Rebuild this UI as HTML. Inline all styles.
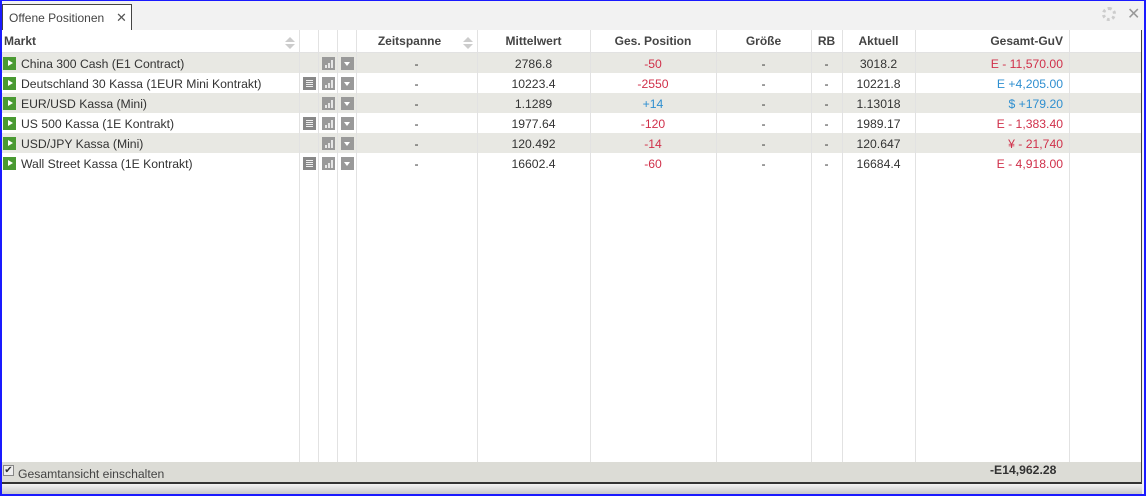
<!DOCTYPE html>
<html><head><meta charset="utf-8"><style>
*{margin:0;padding:0;box-sizing:border-box}
body{width:1146px;height:496px;overflow:hidden;background:#f2f2f2;font-family:"Liberation Sans",Arial,sans-serif;font-size:12px;color:#333;position:relative}
.frame{position:absolute;left:0;top:0;width:1146px;height:496px;border:2px solid #1a1aff;border-top-width:1px;pointer-events:none;z-index:10}
.tab{position:absolute;left:2px;top:4px;width:130px;height:27px;background:#fff;border:1px solid #444;border-bottom:none;font-size:12px;color:#444;padding:6px 0 0 6px}
.tab span{position:absolute;left:113px;top:5px;font-size:13px;color:#555}
.panel{position:absolute;left:2px;top:30px;width:1140px;height:454px;background:#fff;border-right:1px solid #444;border-bottom:2px solid #333}
.vl{position:absolute;top:30px;height:432px;width:1px;background:#e2e2e2}
.hdr{position:absolute;top:30px;height:23px;font-weight:bold;font-size:12px;color:#444;line-height:23px;white-space:nowrap}
.row{position:absolute;left:2px;width:1139px;height:20px}
.row.g{background:#e8e8e3}
.c{position:absolute;top:1px;line-height:20px;white-space:nowrap;font-size:12.2px;color:#333}
.play{position:absolute;left:3px;top:4px;width:13px;height:13px;background:#4a9a32}
.play:after{content:"";position:absolute;left:5px;top:3px;border-left:5px solid #fff;border-top:3.5px solid transparent;border-bottom:3.5px solid transparent}
.ic{position:absolute;top:4px;width:13px;height:13px;background:#999}
.bar i{position:absolute;bottom:2px;width:2px;background:#e6e6e6}
.dd:after{content:"";position:absolute;left:3px;top:5px;border-top:4px solid #fff;border-left:3.5px solid transparent;border-right:3.5px solid transparent}
.nw{background:#888}
.nw:after{content:"";position:absolute;left:2px;top:2px;width:9px;height:9px;background:repeating-linear-gradient(#888 0 1px,#eee 1px 2px);box-shadow:inset 0 0 0 1px #888}
.red{color:#d0304a}.blue{color:#2f8fd0}
.sort{position:absolute;top:37px;width:10px;height:12px}
.sort:before{content:"";position:absolute;left:0;top:0;border-bottom:5px solid #ccc;border-left:5px solid transparent;border-right:5px solid transparent}
.sort:after{content:"";position:absolute;left:0;top:7px;border-top:5px solid #ccc;border-left:5px solid transparent;border-right:5px solid transparent}
.foot{position:absolute;left:2px;top:462px;width:1139px;height:20px;background:#dcdcd6}
.bot{position:absolute;left:2px;top:485px;width:1140px;height:9px;background:linear-gradient(#eee,#c8c8c8)}
</style></head><body>
<div class="tab">Offene Positionen<span>✕</span></div>
<div style="position:absolute;left:1102px;top:7px;width:14px;height:14px;border:3px dotted #ccc;border-radius:50%"></div>
<div style="position:absolute;left:1127px;top:4px;font-size:16px;color:#999">✕</div>
<div class="panel"></div>
<div class="row g" style="top:53px"></div>
<div class="row" style="top:73px"></div>
<div class="row g" style="top:93px"></div>
<div class="row" style="top:113px"></div>
<div class="row g" style="top:133px"></div>
<div class="row" style="top:153px"></div>
<div class="vl" style="left:299px"></div><div class="vl" style="left:318px"></div><div class="vl" style="left:337px"></div><div class="vl" style="left:356px"></div><div class="vl" style="left:477px"></div><div class="vl" style="left:590px"></div><div class="vl" style="left:716px"></div><div class="vl" style="left:811px"></div><div class="vl" style="left:842px"></div><div class="vl" style="left:915px"></div><div class="vl" style="left:1069px"></div>
<div style="position:absolute;left:2px;top:52px;width:1139px;height:1px;background:#e2e2e2"></div>
<div class="hdr" style="left:4px">Markt</div><div class="sort" style="left:285px"></div>
<div class="hdr" style="left:356px;width:107px;text-align:center">Zeitspanne</div><div class="sort" style="left:463px"></div>
<div class="hdr" style="left:477px;width:113px;text-align:center">Mittelwert</div>
<div class="hdr" style="left:590px;width:126px;text-align:center">Ges. Position</div>
<div class="hdr" style="left:716px;width:95px;text-align:center">Größe</div>
<div class="hdr" style="left:811px;width:31px;text-align:center">RB</div>
<div class="hdr" style="left:842px;width:73px;text-align:center">Aktuell</div>
<div class="hdr" style="left:915px;width:148px;text-align:right">Gesamt-GuV</div>

<div style="position:absolute;left:0;top:53px;width:1146px;height:20px">
<div class="play"></div><div class="c" style="left:21px">China 300 Cash (E1 Contract)</div>
<div class="ic bar" style="left:322px"><i style="left:3px;height:3px"></i><i style="left:6px;height:5px"></i><i style="left:9px;height:8px"></i></div><div class="ic dd" style="left:341px"></div>
<div class="c" style="left:356px;width:121px;text-align:center">-</div><div class="c" style="left:477px;width:113px;text-align:center">2786.8</div><div class="c red" style="left:590px;width:126px;text-align:center">-50</div><div class="c" style="left:716px;width:95px;text-align:center">-</div><div class="c" style="left:811px;width:31px;text-align:center">-</div><div class="c" style="left:842px;width:73px;text-align:center">3018.2</div><div class="c red" style="left:915px;width:148px;text-align:right">E - 11,570.00</div></div>
<div style="position:absolute;left:0;top:73px;width:1146px;height:20px">
<div class="play"></div><div class="c" style="left:21px">Deutschland 30 Kassa (1EUR Mini Kontrakt)</div>
<div class="ic nw" style="left:303px"></div><div class="ic bar" style="left:322px"><i style="left:3px;height:3px"></i><i style="left:6px;height:5px"></i><i style="left:9px;height:8px"></i></div><div class="ic dd" style="left:341px"></div>
<div class="c" style="left:356px;width:121px;text-align:center">-</div><div class="c" style="left:477px;width:113px;text-align:center">10223.4</div><div class="c red" style="left:590px;width:126px;text-align:center">-2550</div><div class="c" style="left:716px;width:95px;text-align:center">-</div><div class="c" style="left:811px;width:31px;text-align:center">-</div><div class="c" style="left:842px;width:73px;text-align:center">10221.8</div><div class="c blue" style="left:915px;width:148px;text-align:right">E +4,205.00</div></div>
<div style="position:absolute;left:0;top:93px;width:1146px;height:20px">
<div class="play"></div><div class="c" style="left:21px">EUR/USD Kassa (Mini)</div>
<div class="ic bar" style="left:322px"><i style="left:3px;height:3px"></i><i style="left:6px;height:5px"></i><i style="left:9px;height:8px"></i></div><div class="ic dd" style="left:341px"></div>
<div class="c" style="left:356px;width:121px;text-align:center">-</div><div class="c" style="left:477px;width:113px;text-align:center">1.1289</div><div class="c blue" style="left:590px;width:126px;text-align:center">+14</div><div class="c" style="left:716px;width:95px;text-align:center">-</div><div class="c" style="left:811px;width:31px;text-align:center">-</div><div class="c" style="left:842px;width:73px;text-align:center">1.13018</div><div class="c blue" style="left:915px;width:148px;text-align:right">$ +179.20</div></div>
<div style="position:absolute;left:0;top:113px;width:1146px;height:20px">
<div class="play"></div><div class="c" style="left:21px">US 500 Kassa (1E Kontrakt)</div>
<div class="ic nw" style="left:303px"></div><div class="ic bar" style="left:322px"><i style="left:3px;height:3px"></i><i style="left:6px;height:5px"></i><i style="left:9px;height:8px"></i></div><div class="ic dd" style="left:341px"></div>
<div class="c" style="left:356px;width:121px;text-align:center">-</div><div class="c" style="left:477px;width:113px;text-align:center">1977.64</div><div class="c red" style="left:590px;width:126px;text-align:center">-120</div><div class="c" style="left:716px;width:95px;text-align:center">-</div><div class="c" style="left:811px;width:31px;text-align:center">-</div><div class="c" style="left:842px;width:73px;text-align:center">1989.17</div><div class="c red" style="left:915px;width:148px;text-align:right">E - 1,383.40</div></div>
<div style="position:absolute;left:0;top:133px;width:1146px;height:20px">
<div class="play"></div><div class="c" style="left:21px">USD/JPY Kassa (Mini)</div>
<div class="ic bar" style="left:322px"><i style="left:3px;height:3px"></i><i style="left:6px;height:5px"></i><i style="left:9px;height:8px"></i></div><div class="ic dd" style="left:341px"></div>
<div class="c" style="left:356px;width:121px;text-align:center">-</div><div class="c" style="left:477px;width:113px;text-align:center">120.492</div><div class="c red" style="left:590px;width:126px;text-align:center">-14</div><div class="c" style="left:716px;width:95px;text-align:center">-</div><div class="c" style="left:811px;width:31px;text-align:center">-</div><div class="c" style="left:842px;width:73px;text-align:center">120.647</div><div class="c red" style="left:915px;width:148px;text-align:right">¥ - 21,740</div></div>
<div style="position:absolute;left:0;top:153px;width:1146px;height:20px">
<div class="play"></div><div class="c" style="left:21px">Wall Street Kassa (1E Kontrakt)</div>
<div class="ic nw" style="left:303px"></div><div class="ic bar" style="left:322px"><i style="left:3px;height:3px"></i><i style="left:6px;height:5px"></i><i style="left:9px;height:8px"></i></div><div class="ic dd" style="left:341px"></div>
<div class="c" style="left:356px;width:121px;text-align:center">-</div><div class="c" style="left:477px;width:113px;text-align:center">16602.4</div><div class="c red" style="left:590px;width:126px;text-align:center">-60</div><div class="c" style="left:716px;width:95px;text-align:center">-</div><div class="c" style="left:811px;width:31px;text-align:center">-</div><div class="c" style="left:842px;width:73px;text-align:center">16684.4</div><div class="c red" style="left:915px;width:148px;text-align:right">E - 4,918.00</div></div>

<div class="foot">
<div style="position:absolute;left:1px;top:3px;width:11px;height:11px;background:#eee;border:1px solid #888;font-size:10px;line-height:9px;text-align:center;color:#333">✔</div>
<div class="c" style="left:16px;top:2px;color:#444">Gesamtansicht einschalten</div>
<div class="c" style="left:988px;top:-2px;font-weight:bold;color:#333">-E14,962.28</div>
</div>
<div class="bot"></div>
<div class="frame"></div>
</body></html>
